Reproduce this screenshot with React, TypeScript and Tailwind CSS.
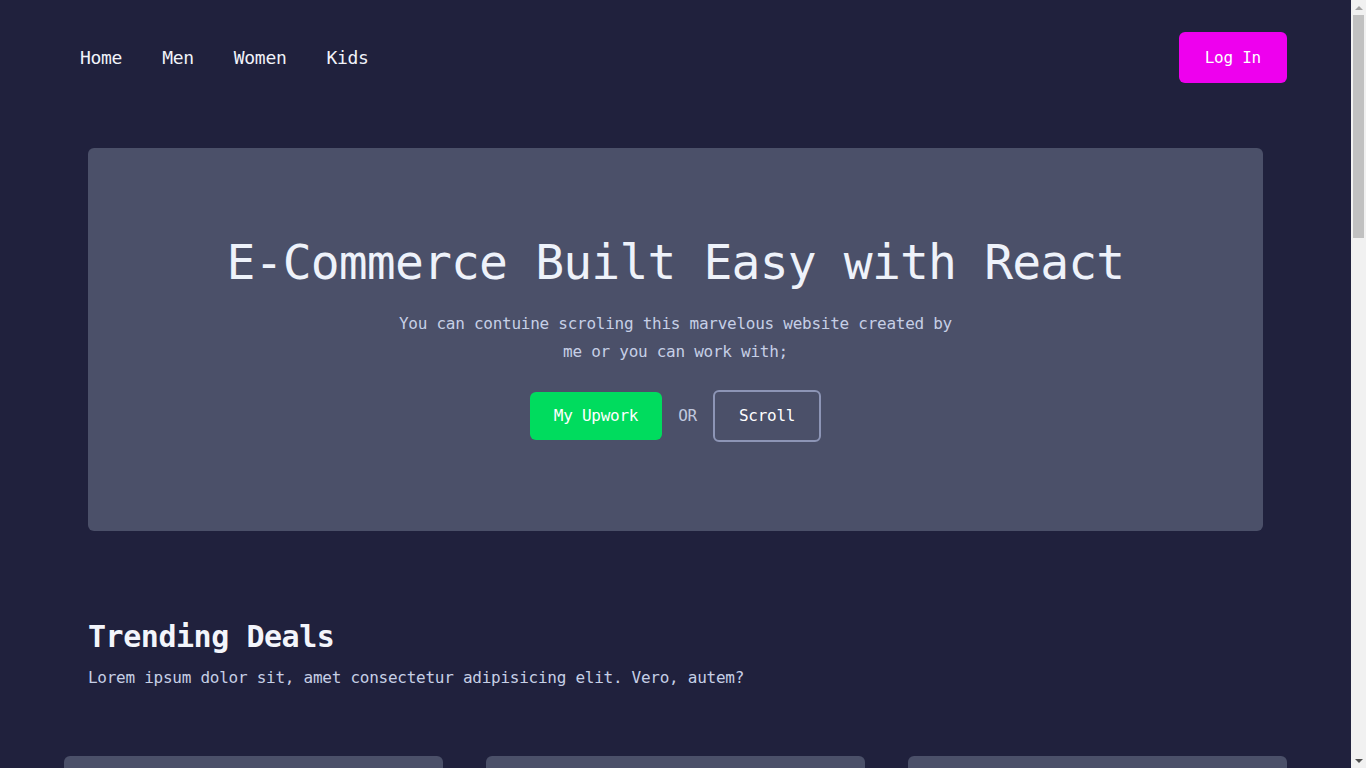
import { useState } from 'react';

const links = ['Home', 'Men', 'Women', 'Kids'];

function Navbar() {
  return (
    <nav className="flex items-center justify-between pl-20 pr-16 pt-8">
      <ul className="flex items-center gap-10">
        {links.map((l) => (
          <li key={l}>
            <a href="#" className="text-lg tracking-[-0.3px] text-[#f1f3fa]">
              {l}
            </a>
          </li>
        ))}
      </ul>
      <button className="h-[51px] rounded-md bg-[#ee00ee] px-[26px] text-base tracking-[-0.26px] text-white">
        Log In
      </button>
    </nav>
  );
}

function Hero() {
  return (
    <section className="mx-[88px] mt-[65px] flex h-[383px] flex-col items-center justify-center rounded-md bg-[#4b5069] text-center">
      <h1 className="text-5xl leading-none tracking-[-0.84px] text-[#eef2fa]">
        E-Commerce Built Easy with React
      </h1>
      <p className="mt-6 max-w-xl text-base leading-7 tracking-[-0.26px] text-[#c6cfe6]">
        You can contuine scroling this marvelous website created by me or you can work with;
      </p>
      <div className="mt-6 flex items-center gap-4 tracking-[-0.26px]">
        <a href="#" className="rounded-md bg-[#00dc5e] px-6 py-3 text-base leading-6 text-white">
          My Upwork
        </a>
        <span className="text-base text-[#c0c8de]">OR</span>
        <a
          href="#"
          className="rounded-md border-2 border-[#8d95b6] px-6 py-3 text-base leading-6 text-white"
        >
          Scroll
        </a>
      </div>
    </section>
  );
}

function Trending() {
  const [cards] = useState([1, 2, 3, 4, 5, 6]);
  return (
    <section className="mt-[88px]">
      <div className="px-[88px]">
        <h2 className="text-3xl font-bold tracking-[-0.46px] text-[#f3f5fb]">Trending Deals</h2>
        <p className="mt-[11px] text-base tracking-[-0.26px] text-[#c6cfe6]">
          Lorem ipsum dolor sit, amet consectetur adipisicing elit. Vero, autem?
        </p>
      </div>
      <div className="mt-[66px] grid grid-cols-3 gap-[43px] px-16">
        {cards.map((c) => (
          <div key={c} className="h-[420px] rounded-md bg-[#4b5069]"></div>
        ))}
      </div>
    </section>
  );
}

// the page scrollbar, as it shows in the window
function Scrollbar() {
  return (
    <aside className="flex h-screen w-[15px] shrink-0 flex-col bg-[#f1f1f1]">
      <div className="flex h-[15px] items-center justify-center">
        <div className="h-0 w-0 border-x-[4px] border-b-[4px] border-x-transparent border-b-[#a3a3a3]"></div>
      </div>
      <div className="mx-[2px] h-[223px] bg-[#c1c1c1]"></div>
      <div className="flex-1"></div>
      <div className="flex h-[15px] items-center justify-center">
        <div className="h-0 w-0 border-x-[4px] border-t-[4px] border-x-transparent border-t-[#505050]"></div>
      </div>
    </aside>
  );
}

export default function App() {
  return (
    <div
      className="flex h-screen bg-[#20213d]"
      style={{ fontFamily: '"DejaVu Sans Mono", "Liberation Mono", monospace' }}
    >
      <main className="h-screen flex-1 overflow-y-auto">
        <div className="pb-[400px]">
          <Navbar />
          <Hero />
          <Trending />
        </div>
      </main>
      <Scrollbar />
    </div>
  );
}
